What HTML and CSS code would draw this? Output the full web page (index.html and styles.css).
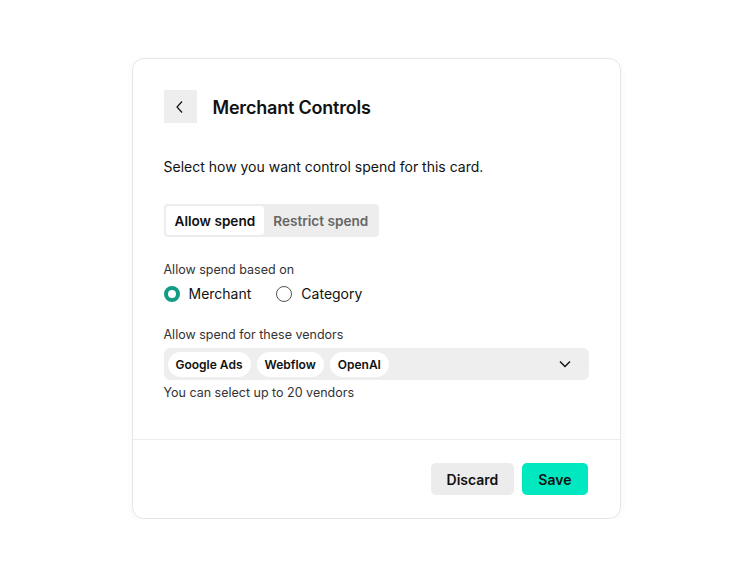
FILE: index.html
```html
<!DOCTYPE html>
<html lang="en">
<head>
    <meta charset="UTF-8">
    <meta name="viewport" content="width=device-width, initial-scale=1.0">
    <title>Merchant Controls</title>
    <link rel="stylesheet" href="styles.css">
</head>
<body>
    <div class="card">
        <div class="cardBody">
            <header class="cardHead">
                <a href="#" class="backBtn">
                    <svg width="14" height="14" viewBox="0 0 14 14"><path d="M9 1.5 L4 7 L9 12.5" fill="none" stroke="#111" stroke-width="1.2"/></svg>
                </a>
                <h1>Merchant Controls</h1>
            </header>
            <p class="desc">Select how you want control spend for this card.</p>
            <div class="segment">
                <button class="on">Allow spend</button>
                <button>Restrict spend</button>
            </div>
            <p class="label basedLabel">Allow spend based on</p>
            <div class="radios">
                <label class="radio"><span class="dot on"></span>Merchant</label>
                <label class="radio"><span class="dot"></span>Category</label>
            </div>
            <p class="label vendorLabel">Allow spend for these vendors</p>
            <div class="select">
                <span class="chip">Google Ads</span>
                <span class="chip">Webflow</span>
                <span class="chip">OpenAI</span>
                <svg class="chev" width="14" height="14" viewBox="0 0 14 14"><path d="M2 4.5 L7 9.5 L12 4.5" fill="none" stroke="#111" stroke-width="1.4"/></svg>
            </div>
            <p class="hint">You can select up to 20 vendors</p>
        </div>
        <footer class="cardFoot">
            <button class="btn discard">Discard</button>
            <button class="btn save">Save</button>
        </footer>
    </div>
</body>
</html>
```

FILE: styles.css
```css
/* reset */
* {box-sizing: border-box;}
body, h1, p {margin: 0; padding: 0;}
a {text-decoration: none;}
button {font: inherit; border: 0; cursor: pointer;}
body {background: #fff; font-family: Inter, "Noto Sans", sans-serif; color: #111;}

/* card */
.card {width: 489px; margin: 58px auto 0;
    background: #fff; border: 1px solid #e6e6e6; border-radius: 12px;
    box-shadow: 0 2px 10px rgba(0,0,0,0.04);}
.cardBody {padding: 31px 31px 37px;}

/* head */
.cardHead {display: flex; align-items: center; gap: 16px;}
.backBtn {display: flex; align-items: center; justify-content: center;
    width: 33px; height: 33px; background: #eeeeee;}
.cardHead h1 {font-size: 18px; font-weight: 600; letter-spacing: -0.2px; padding-top: 2px;}

.desc {margin-top: 33px; font-size: 14px; line-height: 22px;}

/* segment */
.segment {display: inline-flex; margin-top: 26px; padding: 2px;
    background: #ededed; border-radius: 4px;}
.segment button {height: 29px; padding: 0 9px; font-size: 13.6px; font-weight: 600;
    color: #666; background: transparent; border-radius: 3px;}
.segment button.on {background: #fff; color: #111;}

/* labels */
.label {font-size: 12.5px; line-height: 18px; color: #333;}
.basedLabel {margin-top: 24px;}
.vendorLabel {margin-top: 21px;}

/* radios */
.radios {display: flex; gap: 25px; margin-top: 4px;}
.radio {display: flex; align-items: center; gap: 9px; font-size: 14px; line-height: 22px;}
.dot {width: 16px; height: 16px; border-radius: 50%; border: 1px solid #555;}
.dot.on {border: 4px solid #139c84;}

/* select */
.select {display: flex; align-items: center; gap: 6px; height: 32px; margin-top: 4px;
    padding: 0 17px 0 4px; background: #eeeeee; border-radius: 6px;}
.chip {height: 25px; padding: 0 8px; line-height: 25px; border-radius: 13px;
    background: #fff; font-size: 12px; font-weight: 600;}
.chev {margin-left: auto;}
.hint {margin-top: 4px; font-size: 12.5px; line-height: 18px; color: #333;}

/* footer */
.cardFoot {display: flex; justify-content: flex-end; gap: 8px;
    padding: 23px 32px 23px; border-top: 1px solid #ececec;}
.btn {height: 32px; padding: 0 16px; border-radius: 5px; font-size: 14px; font-weight: 600; color: #111;}
.discard {background: #ececec;}
.save {background: #00e8bf;}
```
